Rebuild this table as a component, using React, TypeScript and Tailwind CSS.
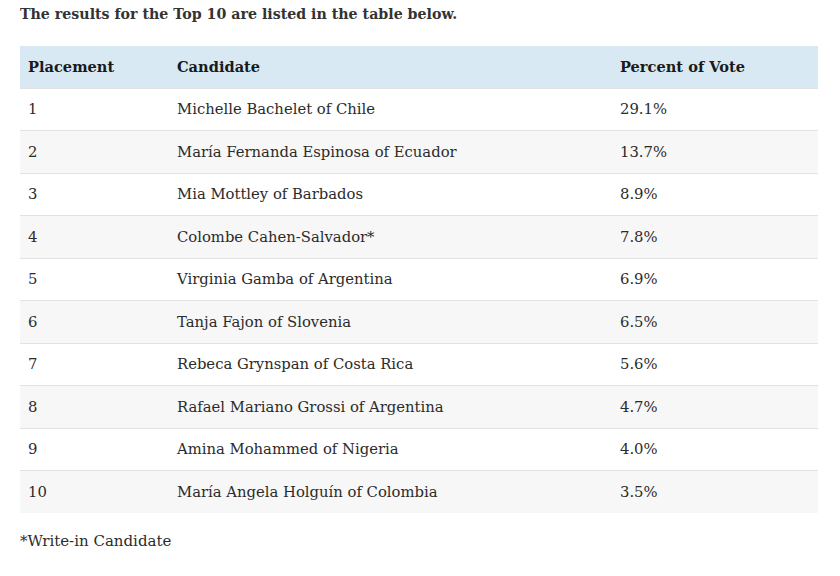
const rows: [string, string, string][] = [
  ['1', 'Michelle Bachelet of Chile', '29.1%'],
  ['2', 'María Fernanda Espinosa of Ecuador', '13.7%'],
  ['3', 'Mia Mottley of Barbados', '8.9%'],
  ['4', 'Colombe Cahen-Salvador*', '7.8%'],
  ['5', 'Virginia Gamba of Argentina', '6.9%'],
  ['6', 'Tanja Fajon of Slovenia', '6.5%'],
  ['7', 'Rebeca Grynspan of Costa Rica', '5.6%'],
  ['8', 'Rafael Mariano Grossi of Argentina', '4.7%'],
  ['9', 'Amina Mohammed of Nigeria', '4.0%'],
  ['10', 'María Angela Holguín of Colombia', '3.5%'],
];

export default function App() {
  return (
    <div className="w-[840px] h-[576px] bg-white px-5 font-['DejaVu_Serif',serif] text-[#2b2b2b]">
      <p className="pt-[4px] h-[46px] text-[14.2px] font-bold text-[#333]">
        The results for the Top 10 are listed in the table below.
      </p>
      <table className="w-[798px] border-collapse text-[14.8px]">
        <thead>
          <tr className="bg-[#d8e9f4] h-[42px] text-[14.6px]">
            <th className="w-[149px] text-left pl-2 font-bold text-[#1a1a1a]">Placement</th>
            <th className="w-[443px] text-left pl-2 font-bold text-[#1a1a1a]">Candidate</th>
            <th className="text-left pl-2 font-bold text-[#1a1a1a]">Percent of Vote</th>
          </tr>
        </thead>
        <tbody>
          {rows.map(([n, name, pct], i) => (
            <tr
              key={n}
              className={`h-[42.5px] border-t border-[#e2e2e2] ${i % 2 === 1 ? 'bg-[#f7f7f7]' : 'bg-white'}`}
            >
              <td className="pl-2">{n}</td>
              <td className="pl-2">{name}</td>
              <td className="pl-2">{pct}</td>
            </tr>
          ))}
        </tbody>
      </table>
      <p className="mt-[17px] text-[15px]">*Write-in Candidate</p>
    </div>
  );
}
